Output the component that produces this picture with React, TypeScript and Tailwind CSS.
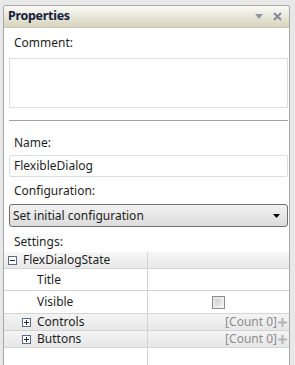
import { ChevronDown } from 'lucide-react';

const font = { fontFamily: '"Noto Sans", "Open Sans", sans-serif' };

function PlusBox({ minus }: { minus?: boolean }) {
    return (
        <svg width="9" height="9" viewBox="0 0 9 9" className="shrink-0">
            <rect x="0.5" y="0.5" width="8" height="8" fill="#fff" stroke="#5a6b85" />
            <path d="M2 4.5h5" stroke="#1d2a44" />
            {!minus && <path d="M4.5 2v5" stroke="#1d2a44" />}
        </svg>
    );
}

function AddIcon() {
    return (
        <svg width="9" height="9" viewBox="0 0 9 9" className="shrink-0">
            <path d="M4.5 0v9M0 4.5h9" stroke="#b5b5b5" strokeWidth="2" />
        </svg>
    );
}

export default function App() {
    return (
        <div className="w-[295px] h-[365px] bg-[#e8e8e8] pt-[5px] pl-[3px] flex text-[12px] text-[#1e1e1e]" style={font}>
            <div className="w-[287px] h-full border border-b-0 border-[#a6a6a6] rounded-t-[3px] bg-white flex flex-col overflow-hidden">
                {/* header */}
                <div className="h-[22px] flex items-center px-[4px] bg-gradient-to-b from-[#fbfbf7] to-[#d6d3bd] border-b border-[#c9c7b2]">
                    <span className="font-bold text-[12.5px] text-[#14203d] tracking-[-0.3px]">Properties</span>
                    <div className="ml-auto flex items-center gap-[10px] pr-[3px]">
                        <svg width="8" height="5" viewBox="0 0 8 5"><path d="M0 0h8L4 5z" fill="#8d96a3" /></svg>
                        <svg width="9" height="9" viewBox="0 0 9 9"><path d="M1 1l7 7M8 1l-7 7" stroke="#7f8b9b" strokeWidth="2" /></svg>
                    </div>
                </div>

                <div className="pl-[5px] pr-[1px] flex flex-col">
                    <div className="pl-[5px] pt-[7px] h-[30px] leading-[16px]">Comment:</div>
                    <div className="h-[50px] border border-[#dadee5] bg-white" />
                    <div className="mt-[12px] h-[1px] bg-[#a2a2a2]" />
                    <div className="pl-[5px] pt-[14px] h-[34px] leading-[16px]">Name:</div>
                    <div className="h-[22px] border border-[#dadee5] rounded-[2px] flex items-center pl-[4px]">FlexibleDialog</div>
                    <div className="pl-[5px] pt-[6px] h-[27px] leading-[16px]">Configuration:</div>
                    <div className="h-[23px] border border-[#707070] rounded-[3px] bg-gradient-to-b from-[#f2f2f2] to-[#dcdcdc] flex items-center pl-[3px] pr-[7px]">
                        <span>Set initial configuration</span>
                        <svg width="7" height="4" viewBox="0 0 7 4" className="ml-auto"><path d="M0 0h7L3.5 4z" fill="#000" /></svg>
                    </div>
                    <div className="pl-[5px] pt-[7px] h-[25px] leading-[16px]">Settings:</div>
                </div>

                {/* property grid */}
                <div className="flex-1 flex flex-col relative">
                    <div className="h-[17px] flex items-center bg-gradient-to-b from-[#f7f7f7] to-[#e9e9e9] border-b border-[#d4d4d4]">
                        <div className="w-[144px] flex items-center gap-[6px] pl-[4px] border-r border-[#d4d4d4] h-full">
                            <PlusBox minus />
                            <span>FlexDialogState</span>
                        </div>
                    </div>
                    <div className="h-[22px] flex border-b border-[#d4d4d4]">
                        <div className="w-[144px] flex items-center pl-[33px] border-r border-[#d4d4d4]">Title</div>
                        <div className="flex-1" />
                    </div>
                    <div className="h-[23px] flex border-b border-[#d4d4d4]">
                        <div className="w-[144px] flex items-center pl-[33px] border-r border-[#d4d4d4]">Visible</div>
                        <div className="flex-1 flex items-center pl-[64px]">
                            <div className="w-[13px] h-[13px] border border-[#8e8e8e] bg-gradient-to-br from-[#e2e2e2] to-[#f6f6f6] p-[2px]">
                                <div className="w-full h-full bg-gradient-to-br from-[#cfcfcf] to-[#ececec]" />
                            </div>
                        </div>
                    </div>
                    {['Controls', 'Buttons'].map((n) => (
                        <div key={n} className="h-[17px] flex bg-gradient-to-b from-[#f4f4f4] to-[#e7e7e7] border-b border-[#d4d4d4]">
                            <div className="w-[144px] flex items-center gap-[6px] pl-[18px] border-r border-[#d4d4d4]">
                                <PlusBox />
                                <span>{n}</span>
                            </div>
                            <div className="flex-1 flex items-center justify-end pr-[2px] gap-[1px]">
                                <span className="text-[#8c8c8c]">[Count 0]</span>
                                <AddIcon />
                            </div>
                        </div>
                    ))}
                    <div className="flex-1 flex">
                        <div className="w-[144px] border-r border-[#d4d4d4]" />
                    </div>
                </div>
            </div>
        </div>
    );
}
